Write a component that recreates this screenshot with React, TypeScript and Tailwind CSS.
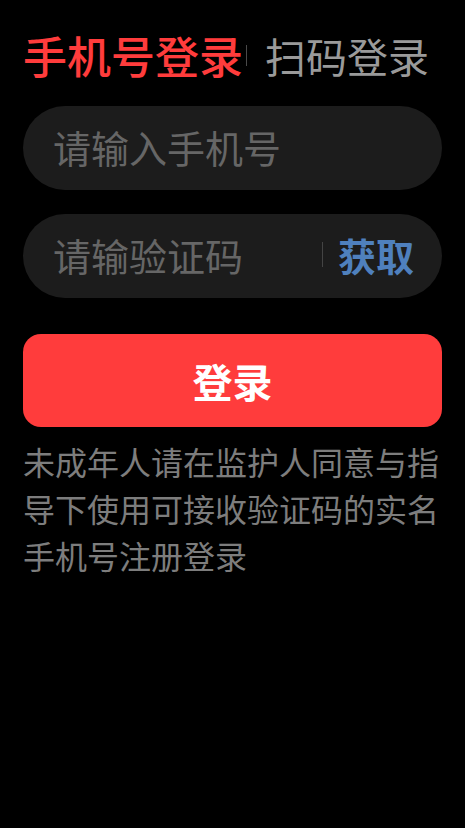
import React, { useState } from 'react';

const font = { fontFamily: '"Noto Sans CJK SC", "Noto Sans", sans-serif' };

const App = () => {
  const [tab, setTab] = useState('phone');
  const [phone, setPhone] = useState('');
  const [code, setCode] = useState('');

  return (
    <div className="min-h-screen w-full bg-black px-[23px] pt-[30px]" style={font}>
      {/* Tabs */}
      <div className="flex items-center h-[50px]">
        <button
          onClick={() => setTab('phone')}
          className={`text-[44px] leading-[50px] font-medium ${tab === 'phone' ? 'text-[#ff3c3c]' : 'text-[#9a9a9a]'}`}
        >
          手机号登录
        </button>
        <div className="w-px h-[21px] bg-[#4a4a4a] ml-[3px]" />
        <button
          onClick={() => setTab('scan')}
          className={`ml-[18px] text-[41px] leading-[50px] ${tab === 'scan' ? 'text-[#ff3c3c] font-medium' : 'text-[#9a9a9a]'}`}
        >
          扫码登录
        </button>
      </div>

      {/* Phone */}
      <div className="mt-[26px] h-[84px] rounded-full bg-[#1c1c1c] flex items-center pl-[30px] pr-[28px] pb-[3px]">
        <input
          value={phone}
          onChange={(e) => setPhone(e.target.value)}
          placeholder="请输入手机号"
          className="w-full bg-transparent outline-none text-[38px] text-white placeholder:text-[#666666]"
        />
      </div>

      {/* Code */}
      <div className="mt-[24px] h-[84px] rounded-full bg-[#1c1c1c] flex items-center pl-[30px] pr-[28px] pb-[3px]">
        <input
          value={code}
          onChange={(e) => setCode(e.target.value)}
          placeholder="请输验证码"
          className="flex-1 min-w-0 bg-transparent outline-none text-[38px] text-white placeholder:text-[#666666]"
        />
        <div className="w-px h-[25px] bg-[#444444] mr-[15px]" />
        <button className="text-[38px] font-semibold text-[#4f80bd]">获取</button>
      </div>

      {/* Submit */}
      <button className="mt-[36px] w-full h-[93px] rounded-[18px] bg-[#ff3c3c] text-white text-[40px] font-bold">
        登录
      </button>

      {/* Notice */}
      <p className="mt-[11px] text-[32px] leading-[47px] text-[#7d7d7d]">
        未成年人请在监护人同意与指导下使用可接收验证码的实名手机号注册登录
      </p>
    </div>
  );
};

export default App;
